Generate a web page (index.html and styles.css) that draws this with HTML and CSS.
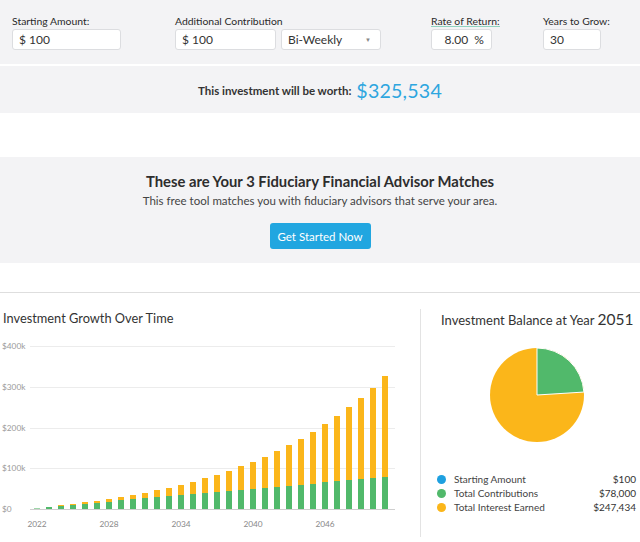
FILE: index.html
```html
<!DOCTYPE html>
<html lang="en">
<head>
<meta charset="utf-8">
<title>Investment Calculator</title>
<link rel="stylesheet" href="styles.css">
</head>
<body>
<section class="calc">
  <div class="field f-start">
    <label class="lbl">Starting Amount:</label>
    <div class="input">$ 100</div>
  </div>
  <div class="field f-contrib">
    <label class="lbl">Additional Contribution</label>
    <div class="pair">
      <div class="input w-contrib">$ 100</div>
      <div class="input select">Bi-Weekly<span class="caret">&#9660;</span></div>
    </div>
  </div>
  <div class="field f-rate">
    <label class="lbl under">Rate of Return:</label>
    <div class="input right">8.00&nbsp; %</div>
  </div>
  <div class="field f-years">
    <label class="lbl">Years to Grow:</label>
    <div class="input">30</div>
  </div>
</section>

<section class="result">
  <span class="result-label">This investment will be worth:</span>
  <span class="result-value">$325,534</span>
</section>

<section class="advisor">
  <h2>These are Your 3 Fiduciary Financial Advisor Matches</h2>
  <p>This free tool matches you with fiduciary advisors that serve your area.</p>
  <button class="cta">Get Started Now</button>
</section>

<section class="charts">
  <div class="growth">
    <h3 class="chart-title">Investment Growth Over Time</h3>
    <div class="chart">
      <div class="yaxis">
        <span>$400k</span><span>$300k</span><span>$200k</span><span>$100k</span><span>$0</span>
      </div>
      <div class="plot">
        <div class="bar"><i class="seg-o" style="height:0.03%"></i><i class="seg-g first" style="height:0.68%"></i></div>
        <div class="bar"><i class="seg-o" style="height:0.11%"></i><i class="seg-g" style="height:1.33%"></i></div>
        <div class="bar"><i class="seg-o" style="height:0.26%"></i><i class="seg-g" style="height:1.98%"></i></div>
        <div class="bar"><i class="seg-o" style="height:0.47%"></i><i class="seg-g" style="height:2.63%"></i></div>
        <div class="bar"><i class="seg-o" style="height:0.75%"></i><i class="seg-g" style="height:3.28%"></i></div>
        <div class="bar"><i class="seg-o" style="height:1.11%"></i><i class="seg-g" style="height:3.93%"></i></div>
        <div class="bar"><i class="seg-o" style="height:1.56%"></i><i class="seg-g" style="height:4.58%"></i></div>
        <div class="bar"><i class="seg-o" style="height:2.09%"></i><i class="seg-g" style="height:5.23%"></i></div>
        <div class="bar"><i class="seg-o" style="height:2.73%"></i><i class="seg-g" style="height:5.88%"></i></div>
        <div class="bar"><i class="seg-o" style="height:3.47%"></i><i class="seg-g" style="height:6.53%"></i></div>
        <div class="bar"><i class="seg-o" style="height:4.32%"></i><i class="seg-g" style="height:7.18%"></i></div>
        <div class="bar"><i class="seg-o" style="height:5.31%"></i><i class="seg-g" style="height:7.83%"></i></div>
        <div class="bar"><i class="seg-o" style="height:6.42%"></i><i class="seg-g" style="height:8.48%"></i></div>
        <div class="bar"><i class="seg-o" style="height:7.69%"></i><i class="seg-g" style="height:9.13%"></i></div>
        <div class="bar"><i class="seg-o" style="height:9.11%"></i><i class="seg-g" style="height:9.78%"></i></div>
        <div class="bar"><i class="seg-o" style="height:10.71%"></i><i class="seg-g" style="height:10.43%"></i></div>
        <div class="bar"><i class="seg-o" style="height:12.49%"></i><i class="seg-g" style="height:11.08%"></i></div>
        <div class="bar"><i class="seg-o" style="height:14.48%"></i><i class="seg-g" style="height:11.73%"></i></div>
        <div class="bar"><i class="seg-o" style="height:16.68%"></i><i class="seg-g" style="height:12.38%"></i></div>
        <div class="bar"><i class="seg-o" style="height:19.12%"></i><i class="seg-g" style="height:13.03%"></i></div>
        <div class="bar"><i class="seg-o" style="height:21.82%"></i><i class="seg-g" style="height:13.68%"></i></div>
        <div class="bar"><i class="seg-o" style="height:24.80%"></i><i class="seg-g" style="height:14.33%"></i></div>
        <div class="bar"><i class="seg-o" style="height:28.08%"></i><i class="seg-g" style="height:14.98%"></i></div>
        <div class="bar"><i class="seg-o" style="height:31.68%"></i><i class="seg-g" style="height:15.63%"></i></div>
        <div class="bar"><i class="seg-o" style="height:35.64%"></i><i class="seg-g" style="height:16.28%"></i></div>
        <div class="bar"><i class="seg-o" style="height:39.99%"></i><i class="seg-g" style="height:16.93%"></i></div>
        <div class="bar"><i class="seg-o" style="height:44.75%"></i><i class="seg-g" style="height:17.58%"></i></div>
        <div class="bar"><i class="seg-o" style="height:49.95%"></i><i class="seg-g" style="height:18.23%"></i></div>
        <div class="bar"><i class="seg-o" style="height:55.65%"></i><i class="seg-g" style="height:18.88%"></i></div>
        <div class="bar"><i class="seg-o" style="height:61.87%"></i><i class="seg-g" style="height:19.53%"></i></div>
      </div>
    </div>
    <div class="xaxis">
      <span>2022</span><span>2028</span><span>2034</span><span>2040</span><span>2046</span>
    </div>
  </div>

  <div class="balance">
    <h3 class="chart-title bal-title">Investment Balance at Year <span class="yr">2051</span></h3>
    <div class="pie-wrap">
      <svg class="pie" width="96" height="96" viewBox="0 0 96 96">
        <circle cx="48" cy="48" r="47" fill="#fbb61a"/>
        <path d="M48 48 L48 1 A47 47 0 0 1 94.9 45.05 Z" fill="#51b96b" stroke="#ffffff" stroke-width="1"/>
      </svg>
    </div>
    <ul class="legend">
      <li><i class="dot blue"></i><span class="name">Starting Amount</span><span class="val">$100</span></li>
      <li><i class="dot green"></i><span class="name">Total Contributions</span><span class="val">$78,000</span></li>
      <li><i class="dot orange"></i><span class="name">Total Interest Earned</span><span class="val">$247,434</span></li>
    </ul>
  </div>
</section>
</body>
</html>
```

FILE: styles.css
```css
* { box-sizing: border-box; }

body {
  margin: 0;
  font-family: "Lato", "Liberation Sans", sans-serif;
  color: #333;
  background: #fff;
  width: 640px;
}

/* ---------- calculator form ---------- */
.calc {
  background: #f3f3f5;
  height: 64px;
  padding: 13px 0 0 12px;
  display: flex;
}

.field { display: flex; flex-direction: column; }
.f-start { width: 109px; margin-right: 54px; }
.f-contrib { width: 206px; margin-right: 50px; }
.f-rate { width: 61px; margin-right: 51px; }
.f-years { width: 58px; }

.lbl {
  font-size: 10.4px;
  line-height: 14px;
  height: 16px;
  color: #2a2a2a;
  white-space: nowrap;
  padding-top: 1px;
}
.lbl.under {
  align-self: flex-start;
  border-bottom: 1px solid #8fd3c0;
  height: 14px;
  margin-bottom: 2px;
}

.input {
  height: 21px;
  background: #fff;
  border: 1px solid #dcdde0;
  border-radius: 3px;
  font-size: 12px;
  line-height: 19px;
  padding: 0 6px;
  color: #333;
  white-space: nowrap;
}
.input.right { text-align: right; padding-right: 7px; }

.pair { display: flex; gap: 5px; }
.w-contrib { width: 101px; }
.select {
  width: 100px;
  display: flex;
  justify-content: space-between;
  padding-right: 9px;
}
.caret { font-size: 6px; color: #888; }

/* ---------- result ---------- */
.result {
  margin-top: 2px;
  height: 47px;
  background: #f3f3f5;
  display: flex;
  align-items: center;
  justify-content: center;
  gap: 5px;
  padding-top: 2px;
}
.result-label { font-size: 11.5px; font-weight: 700; color: #333; }
.result-value { font-size: 19.6px; color: #2ea6df; letter-spacing: 0.2px; }

/* ---------- advisor ---------- */
.advisor {
  margin-top: 44px;
  height: 106px;
  background: #f3f3f5;
  text-align: center;
  padding-top: 15px;
}
.advisor h2 {
  margin: 0;
  font-size: 14.8px;
  line-height: 18px;
  font-weight: 700;
  color: #2d2d2d;
}
.advisor p {
  margin: 3px 0 0;
  font-size: 11.5px;
  line-height: 16px;
  color: #444;
}
.cta {
  margin-top: 14px;
  width: 101px;
  height: 26px;
  border: 0;
  border-radius: 3px;
  background: #21a6e0;
  color: #fff;
  font-family: inherit;
  font-size: 11.5px;
  padding: 0;
}

/* ---------- charts ---------- */
.charts {
  margin-top: 29px;
  border-top: 1px solid #dedede;
  padding-top: 16px;
  display: flex;
}

.growth {
  width: 421px;
  height: 228px;
  border-right: 1px solid #e3e3e3;
}
.chart-title {
  margin: 0;
  font-size: 12.8px;
  line-height: 18px;
  font-weight: 400;
  color: #333;
  padding-left: 3px;
  white-space: nowrap;
}

.chart {
  display: flex;
  margin-top: 19px;
}
.yaxis {
  width: 30px;
  height: 173px;
  margin-top: -5px;
  display: flex;
  flex-direction: column;
  justify-content: space-between;
  font-size: 8.3px;
  line-height: 10px;
  color: #9a9a9a;
  padding-left: 2px;
}
.plot {
  width: 365px;
  height: 164px;
  border-bottom: 1px solid #cfcfcf;
  background-image: repeating-linear-gradient(to bottom, #ececec 0, #ececec 1px, transparent 1px, transparent 40.75px);
  display: flex;
  align-items: stretch;
  gap: 6px;
  padding-left: 4px;
}
.bar {
  width: 6px;
  display: flex;
  flex-direction: column;
  justify-content: flex-end;
}
.seg-o { display: block; background: #fbb61a; }
.seg-g { display: block; background: #51b96b; }
.seg-g.first { background: #9ed6a9; }

.xaxis {
  display: flex;
  padding-left: 1px;
  margin-top: 4px;
  font-size: 8.3px;
  line-height: 12px;
  color: #888;
}
.xaxis span { width: 72px; text-align: center; }

.balance {
  flex: 1;
  padding: 1px 0 0 16px;
}
.bal-title {
  padding-left: 4px;
  font-size: 13px;
}
.yr { font-size: 15.5px; }

.pie-wrap {
  display: flex;
  justify-content: center;
  margin-top: 18px;
  padding-right: 4px;
}
.pie { display: block; }

.legend {
  list-style: none;
  margin: 29px 4px 0 0;
  padding: 0;
  font-size: 10px;
  line-height: 14px;
}
.legend li { display: flex; align-items: center; }
.dot {
  width: 9px;
  height: 9px;
  border-radius: 50%;
  margin-right: 8px;
}
.dot.blue { background: #1ea0e0; }
.dot.green { background: #51b96b; }
.dot.orange { background: #fbb61a; }
.name { flex: 1; color: #444; }
.val { color: #333; }
```
